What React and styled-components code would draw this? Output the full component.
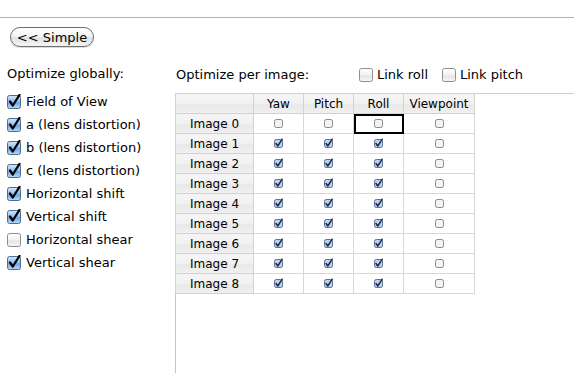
import React from "react";
import styled, { createGlobalStyle } from "styled-components";

const GlobalStyle = createGlobalStyle`
  html, body {
    margin: 0;
    padding: 0;
    background: #ffffff;
  }
  body {
    font-family: "DejaVu Sans", "Liberation Sans", sans-serif;
    font-size: 13px;
    color: #000;
  }
  #root {
    height: 100vh;
  }
`;

const Page = styled.div`
  display: flex;
  flex-direction: column;
  height: 100%;
  overflow: hidden;
`;

const TopRule = styled.div`
  height: 17px;
  border-bottom: 1px solid #b4b4b4;
  flex-shrink: 0;
`;

const ButtonBar = styled.div`
  padding: 9px 0 0 10px;
  flex-shrink: 0;
`;

const PillButton = styled.button`
  height: 20px;
  width: 84px;
  border: 1px solid #6e6e6e;
  border-radius: 10px;
  background: linear-gradient(#ffffff 0%, #f2f2f2 50%, #e2e2e2 51%, #f4f4f4 100%);
  font-family: inherit;
  font-size: 13px;
  color: #000;
  padding: 0;
  box-shadow: 0 1px 1px rgba(0, 0, 0, 0.15);
`;

const Main = styled.div`
  display: flex;
  flex: 1;
  margin-top: 17px;
  min-height: 0;
`;

const LeftPanel = styled.div`
  width: 175px;
  flex-shrink: 0;
  padding-left: 7px;
  box-sizing: border-box;
`;

const Heading = styled.div`
  height: 20px;
  line-height: 20px;
  white-space: nowrap;
`;

const OptionList = styled.div`
  margin-top: 6px;
  display: flex;
  flex-direction: column;
`;

const OptionRow = styled.label`
  display: flex;
  align-items: center;
  height: 23px;
  gap: 5px;
  white-space: nowrap;
`;

const RightPanel = styled.div`
  flex: 1;
  display: flex;
  flex-direction: column;
  min-width: 0;
`;

const PerImageBar = styled.div`
  display: flex;
  align-items: center;
  height: 20px;
  padding-left: 1px;
  white-space: nowrap;
`;

const BarLabel = styled.span`
  width: 183px;
  flex-shrink: 0;
`;

const LinkGroup = styled.label`
  display: flex;
  align-items: center;
  gap: 4px;
  width: ${(p) => p.$width}px;
  flex-shrink: 0;
`;

const Pane = styled.div`
  margin-top: 9px;
  flex: 1;
  border-left: 1px solid #c4c4c4;
  border-top: 1px solid #cfcfcf;
  box-sizing: border-box;
`;

const Grid = styled.table`
  border-collapse: collapse;
  table-layout: fixed;
  margin-top: -1px;
  margin-left: -1px;
  font-size: 12px;
`;

const Row = styled.tr`
  height: 20px;
`;

const HeadCell = styled.th`
  height: 19px;
  padding: 0;
  font-weight: normal;
  text-align: center;
  border: 1px solid #d2d2d2;
  background: linear-gradient(#f6f6f6 0%, #f0f0f0 50%, #e8e8e8 51%, #f1f1f1 100%);
  white-space: nowrap;
  overflow: hidden;
`;

const Cell = styled.td`
  height: 19px;
  padding: 0;
  text-align: center;
  vertical-align: middle;
  border: 1px solid #d8d8d8;
  outline: ${(p) => (p.$focused ? "2px solid #000" : "none")};
  outline-offset: -2px;
  line-height: 0;
`;

const BigBox = ({ checked }) => (
  <svg width="14" height="15" viewBox="0 0 14 15" style={{ flexShrink: 0 }}>
    <defs>
      <linearGradient id="bbOn" x1="0" y1="0" x2="0" y2="1">
        <stop offset="0" stopColor="#d6e8fb" />
        <stop offset="0.5" stopColor="#8fb9e9" />
        <stop offset="0.55" stopColor="#6fa3e0" />
        <stop offset="1" stopColor="#b9dcfb" />
      </linearGradient>
      <linearGradient id="bbOff" x1="0" y1="0" x2="0" y2="1">
        <stop offset="0" stopColor="#ffffff" />
        <stop offset="0.5" stopColor="#f2f2f2" />
        <stop offset="0.55" stopColor="#e6e6e6" />
        <stop offset="1" stopColor="#f6f6f6" />
      </linearGradient>
    </defs>
    <rect
      x="0.5"
      y="1.5"
      width="13"
      height="13"
      rx="2"
      fill={checked ? "url(#bbOn)" : "url(#bbOff)"}
      stroke={checked ? "#4a6c95" : "#8e8e8e"}
    />
    {checked && (
      <path
        d="M3 7.5 L5.8 11.5 L12.5 0.8"
        fill="none"
        stroke="#000"
        strokeWidth="2.2"
        strokeLinecap="round"
        strokeLinejoin="round"
      />
    )}
  </svg>
);

const SmallBox = ({ checked }) => (
  <svg width="11" height="11" viewBox="0 0 11 11" style={{ display: "inline-block" }}>
    <rect
      x="1.5"
      y="1.5"
      width="8"
      height="8"
      rx="1.8"
      fill={checked ? "#bcd3ee" : "#f3f3f3"}
      stroke={checked ? "#5b7290" : "#8a8a8a"}
    />
    {checked && (
      <path
        d="M3 5.5 L4.8 8 L9.2 1.2"
        fill="none"
        stroke="#1b2a44"
        strokeWidth="1.5"
        strokeLinecap="round"
        strokeLinejoin="round"
      />
    )}
  </svg>
);

const globals = [
  ["Field of View", true],
  ["a (lens distortion)", true],
  ["b (lens distortion)", true],
  ["c (lens distortion)", true],
  ["Horizontal shift", true],
  ["Vertical shift", true],
  ["Horizontal shear", false],
  ["Vertical shear", true],
];

const columns = [
  { name: "Yaw", width: 50 },
  { name: "Pitch", width: 50 },
  { name: "Roll", width: 50 },
  { name: "Viewpoint", width: 71 },
];

const images = Array.from({ length: 9 }, (_, i) => ({
  name: `Image ${i}`,
  values: i === 0 ? [false, false, false, false] : [true, true, true, false],
}));

const App = () => {
  return (
    <Page>
      <GlobalStyle />
      <TopRule />
      <ButtonBar>
        <PillButton>&lt;&lt; Simple</PillButton>
      </ButtonBar>
      <Main>
        <LeftPanel>
          <Heading>Optimize globally:</Heading>
          <OptionList>
            {globals.map(([label, on]) => (
              <OptionRow key={label}>
                <BigBox checked={on} />
                {label}
              </OptionRow>
            ))}
          </OptionList>
        </LeftPanel>
        <RightPanel>
          <PerImageBar>
            <BarLabel>Optimize per image:</BarLabel>
            <LinkGroup $width={83}>
              <BigBox checked={false} />
              Link roll
            </LinkGroup>
            <LinkGroup $width={90}>
              <BigBox checked={false} />
              Link pitch
            </LinkGroup>
          </PerImageBar>
          <Pane>
            <Grid>
              <colgroup>
                <col style={{ width: 78 }} />
                {columns.map((c) => (
                  <col key={c.name} style={{ width: c.width }} />
                ))}
              </colgroup>
              <thead>
                <Row>
                  <HeadCell />
                  {columns.map((c) => (
                    <HeadCell key={c.name}>{c.name}</HeadCell>
                  ))}
                </Row>
              </thead>
              <tbody>
                {images.map((img, r) => (
                  <Row key={img.name}>
                    <HeadCell as="th">{img.name}</HeadCell>
                    {img.values.map((v, c) => (
                      <Cell key={c} $focused={r === 0 && c === 2}>
                        <SmallBox checked={v} />
                      </Cell>
                    ))}
                  </Row>
                ))}
              </tbody>
            </Grid>
          </Pane>
        </RightPanel>
      </Main>
    </Page>
  );
};

export default App;
